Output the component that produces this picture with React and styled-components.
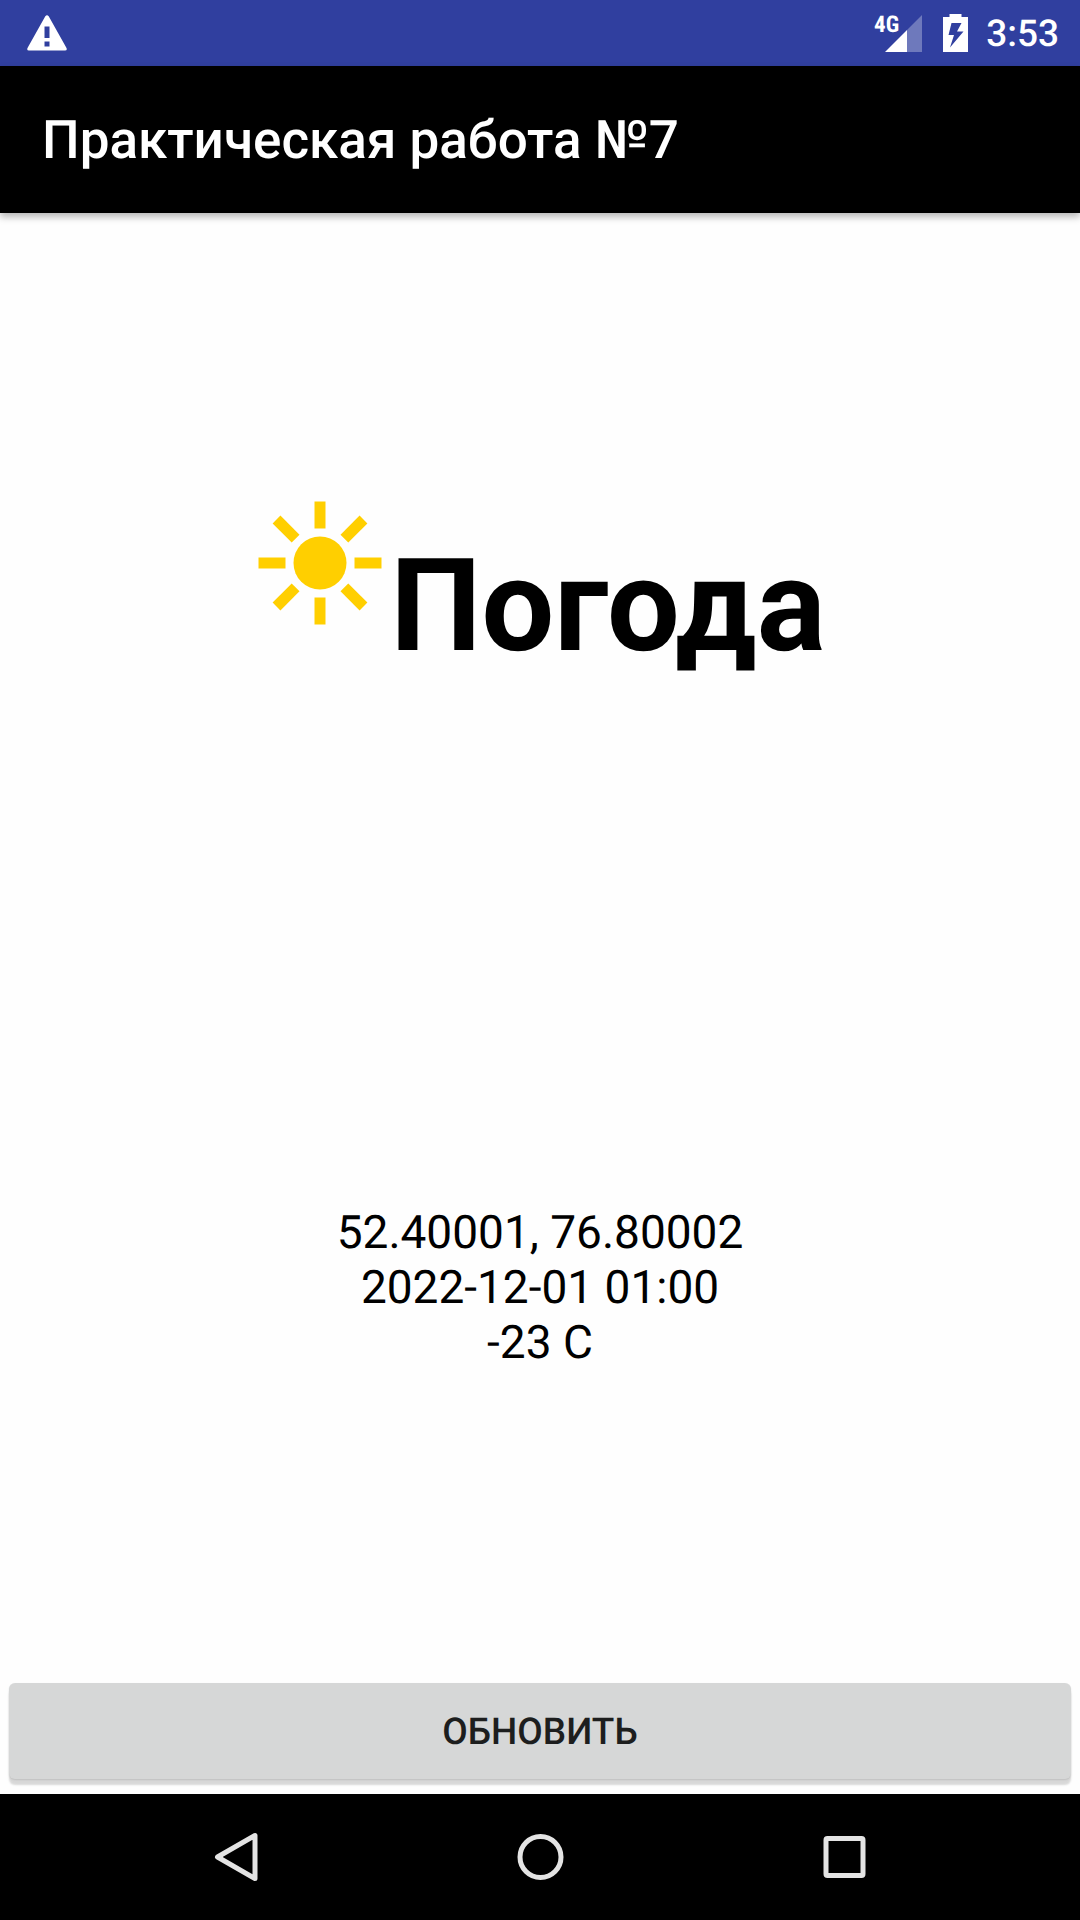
import React from "react";
import styled, { createGlobalStyle } from "styled-components";

const GlobalStyle = createGlobalStyle`
  * { box-sizing: border-box; }
  body {
    margin: 0;
    background: #fefefe;
    font-family: Roboto, "Noto Sans", sans-serif;
    text-rendering: geometricPrecision;
  }
`;

const Screen = styled.div`
  display: flex;
  flex-direction: column;
  min-height: 100vh;
`;

const StatusBar = styled.div`
  display: flex;
  align-items: center;
  justify-content: space-between;
  height: 66px;
  padding: 0 21px 0 27px;
  background: #303f9f;
  color: #fff;
`;

const StatusGroup = styled.div`
  display: flex;
  align-items: center;
`;

const NetworkLabel = styled.span`
  align-self: flex-start;
  margin-right: -14px;
  font: 700 23px/30px "Roboto Condensed", Roboto, sans-serif;
`;

const Battery = styled.svg`
  margin: 0 18px 0 21px;
`;

const Clock = styled.time`
  padding-top: 3px;
  font-size: 37px;
  font-weight: 500;
  line-height: 44px;
`;

const AppBar = styled.header`
  display: flex;
  align-items: center;
  height: 147px;
  padding: 0 42px;
  background: #000;
  box-shadow: 0 4px 7px rgba(0, 0, 0, 0.28);
`;

const Title = styled.h1`
  margin: 0;
  color: #fff;
  font-size: 53px;
  font-weight: 500;
  line-height: 62px;
`;

const Main = styled.main`
  display: flex;
  flex: 1;
  flex-direction: column;
  padding: 288px 9px 15px;
`;

const Brand = styled.div`
  display: flex;
  align-items: flex-start;
  justify-content: center;
  padding-left: 4px;
`;

const BrandName = styled.span`
  margin: 30px 0 0 8px;
  color: #000;
  font-size: 129px;
  font-weight: 700;
  line-height: 152px;
`;

const Readings = styled.p`
  margin: auto 0 312px;
  color: #000;
  font-size: 46px;
  line-height: 55px;
  text-align: center;
  white-space: pre-line;
`;

const RefreshButton = styled.button`
  height: 96px;
  padding: 3px 0 0;
  border: 0;
  border-radius: 6px;
  background: #d6d7d7;
  box-shadow: 0 6px 2px rgba(0, 0, 0, 0.15), 0 1px 2px rgba(0, 0, 0, 0.12);
  color: #1d1e1e;
  font-family: inherit;
  font-size: 37px;
  font-weight: 500;
  line-height: 44px;
  text-rendering: inherit;
  text-transform: uppercase;
`;

const NavBar = styled.nav`
  display: grid;
  grid-template-columns: repeat(3, 304px);
  justify-content: center;
  height: 126px;
  background: #000;
`;

const NavButton = styled.button`
  display: flex;
  align-items: center;
  justify-content: center;
  padding: 0;
  border: 0;
  background: transparent;
`;

const navShapes = {
  Назад: <path d="M12.500 31 50 9.500V52.500Z" />,
  Домой: <circle cx="31.500" cy="31" r="20.500" />,
  Обзор: <rect x="13" y="12.500" width="37" height="37" rx="1.500" />,
};

const rays = [0, 45, 90, 135, 180, 225, 270, 315];

export default function App() {
  return (
    <Screen>
      <GlobalStyle />
      <StatusBar>
        <svg width="40" height="36" viewBox="0 0 40 36" aria-hidden="true">
          <path
            fill="#fff"
            fillRule="evenodd"
            d="M18.300 1.200Q20 -.8 21.700 1.200L39.500 33Q40.500 35.500 38 35.500H2Q-.5 35.500 .5 33ZM17.500 11.500V23H22.500V11.500ZM17.500 26.500V31.500H22.500V26.500Z"
          />
        </svg>
        <StatusGroup>
          <NetworkLabel>4G</NetworkLabel>
          <svg width="37" height="37" viewBox="0 0 37 37" aria-hidden="true">
            <path fill="#fff" fillOpacity=".3" d="M37 0V37H22V15Z" />
            <path fill="#fff" d="M0 37 22 15V37Z" />
          </svg>
          <Battery width="25" height="38" viewBox="0 0 25 38" aria-hidden="true">
            <path
              fill="#fff"
              fillRule="evenodd"
              d="M6.500 0H18.500V3H25V38H0V3H6.500ZM8.500 9 5.500 21H11L7 33.500 20.500 17.500H14L18.500 9Z"
            />
          </Battery>
          <Clock>3:53</Clock>
        </StatusGroup>
      </StatusBar>
      <AppBar>
        <Title>Практическая работа №7</Title>
      </AppBar>
      <Main>
        <Brand>
          <svg width="124" height="124" viewBox="-62 -62 124 124" fill="#ffcf00" aria-hidden="true">
            <circle r="26.500" />
            {rays.map((angle) => (
              <rect key={angle} x="-5.500" y="-61.500" width="11" height="27" transform={`rotate(${angle})`} />
            ))}
          </svg>
          <BrandName>Погода</BrandName>
        </Brand>
        <Readings>{"52.40001, 76.80002\n2022-12-01 01:00\n-23 C"}</Readings>
        <RefreshButton type="button">Обновить</RefreshButton>
      </Main>
      <NavBar>
        {Object.entries(navShapes).map(([label, shape]) => (
          <NavButton key={label} type="button" aria-label={label}>
            <svg width="62" height="62" viewBox="0 0 62 62" fill="none" stroke="#e4e4e4" strokeWidth="5" strokeLinejoin="round">
              {shape}
            </svg>
          </NavButton>
        ))}
      </NavBar>
    </Screen>
  );
}
